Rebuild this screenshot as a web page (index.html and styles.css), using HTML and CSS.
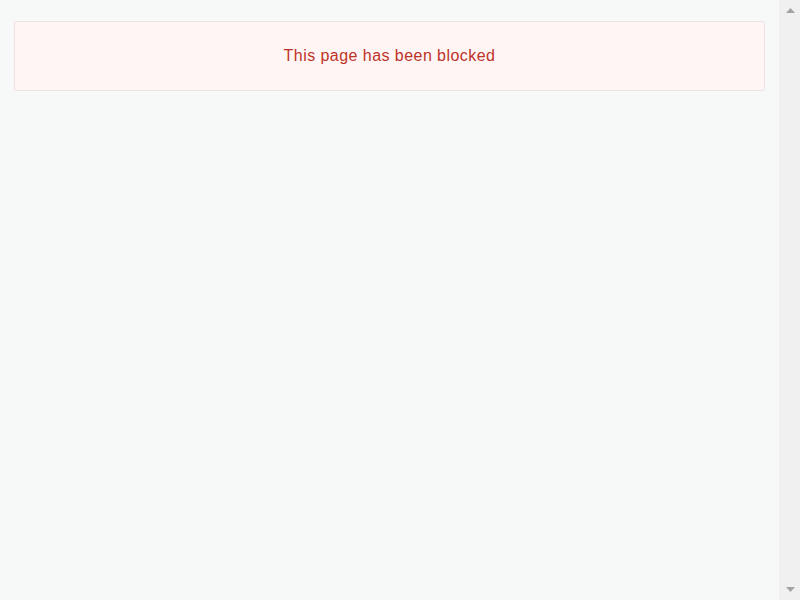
FILE: index.html
```html
<!DOCTYPE html>
<html lang="en">
<head>
<meta charset="utf-8">
<title>Blocked</title>
<link rel="stylesheet" href="styles.css">
</head>
<body>
<main class="page">
  <div class="notice">This page has been blocked</div>
</main>
<aside class="scrollbar" aria-hidden="true">
  <svg class="arrow" width="9" height="5" viewBox="0 0 9 5"><polygon points="4.5,0 9,5 0,5" fill="#a3a3a3"/></svg>
  <svg class="arrow" width="9" height="5" viewBox="0 0 9 5"><polygon points="0,0 9,0 4.5,5" fill="#a3a3a3"/></svg>
</aside>
</body>
</html>
```

FILE: styles.css
```css
html, body {
  margin: 0;
  padding: 0;
  background: #f7f9f9;
}
body {
  display: flex;
  height: 100vh;
  overflow: hidden;
}
.page {
  flex: 1;
  padding: 21px 14px 0;
  box-sizing: border-box;
}
.notice {
  background: #fff5f5;
  border: 1px solid #f0e2e2;
  border-radius: 2px;
  padding: 25px 16px;
  text-align: center;
  font-family: "Liberation Sans", Arial, sans-serif;
  font-size: 16px;
  letter-spacing: 0.45px;
  line-height: 18px;
  color: #bd3328;
}
.scrollbar {
  width: 21px;
  background: #f0f0f0;
  display: flex;
  flex-direction: column;
  justify-content: space-between;
  align-items: center;
  padding: 8px 0 8px;
  box-sizing: border-box;
}
.arrow {
  display: block;
  margin-left: 1px;
}
```
